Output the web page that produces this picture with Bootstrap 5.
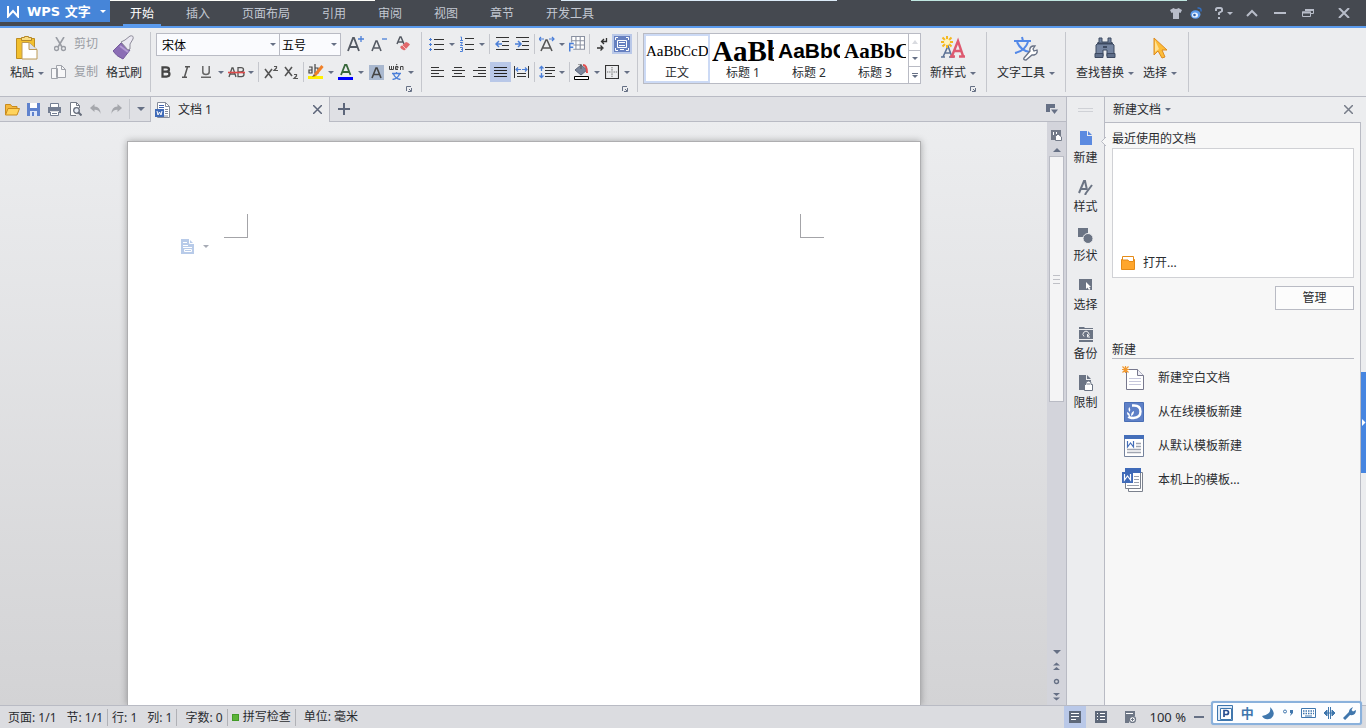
<!DOCTYPE html>
<html lang="zh-CN">
<head>
<meta charset="utf-8">
<meta name="viewport" content="width=device-width, initial-scale=1">
<title>WPS 文字 - 文档 1</title>
<link href="https://cdn.jsdelivr.net/npm/bootstrap@5.3.0/dist/css/bootstrap.min.css" rel="stylesheet">
<style>
:root{--line:#b9bbc4;--face:#ecedef;--bar:#dfe0e4;--ink:#2a2c30}
body{font:12px/16px "Noto Sans","Noto Sans CJK SC",sans-serif;color:var(--ink);background:var(--face);overflow:hidden}
button{background:none;border:0;padding:0;color:inherit;font:inherit;white-space:nowrap}
svg{display:block;flex:none}
.caret{width:0;height:0;border:3px solid transparent;border-top-color:#667085;border-bottom:0;flex:none}
.caret.big{border-width:4px;border-bottom:0}
.caret.up{border-top:0;border-bottom:4px solid #667085}
.line-b{border-bottom:1px solid var(--line)}
.line-r{border-right:1px solid var(--line)}
.line-l{border-left:1px solid var(--line)}
.line-t{border-top:1px solid var(--line)}
/* title bar */
.titlebar{height:28px;border-bottom:2px solid #5b9bee;color:#c3c8d2;background:
 linear-gradient(#fdfdf8,#fdfdf8) 97px 0/278px 1px no-repeat,
 linear-gradient(#dcebf8,#dcebf8) 561px 0/276px 1px no-repeat,
 linear-gradient(#bfe6e0,#bfe6e0) 911px 0/276px 1px no-repeat,#454950}
.brand{width:110px;height:22px;background:#4685d8;color:#fff;font:bold 13px/20px "DejaVu Sans","Noto Sans CJK SC",sans-serif;padding:1px 4px 0 7px}
.menu-link{display:block;padding:0 10px;margin:0 6px;color:#c3c8d2;text-decoration:none;line-height:28px;height:28px}
.menu-link.active{color:#fff;padding:0 7px;margin:0 9px;border-bottom:4px solid #5b9bee}
.win button{width:20px;height:26px;display:flex;align-items:center;justify-content:center;gap:4px}
/* ribbon */
.ribbon{height:69px;padding-top:4px}
.group{height:60px;border-right:1px solid #c5c7cd}
.tool{width:20px;height:20px;display:flex;align-items:center;justify-content:center}
.tool.wide{width:21px}
.tool.on{background:#b9c8e8}
.drop{width:10px;height:20px;display:flex;align-items:center;justify-content:center}
.split{width:1px;height:20px;margin:0 2px;background:#c5c7cd}
.row-a{height:24px;flex:none}
.row-b{height:20px;margin-top:6px;flex:none}
.launch{height:6px;margin-top:4px;flex:none}
.bigbtn{height:54px;display:flex;flex-direction:column;align-items:center}
.bigbtn>svg{margin-top:3px;height:26px}
.bigbtn>span{height:24px;gap:4px}
.dim{color:#9a9da4}
.pick{height:23px;border:1px solid var(--line);border-radius:0;background-color:#fafbfe;color:#000;font:12px/21px "Noto Sans CJK SC",sans-serif;padding:0 12px 0 5px;background-position:right 2px center;background-size:8px 8px;--bs-form-select-bg-img:url("data:image/svg+xml,%3Csvg xmlns='http://www.w3.org/2000/svg' viewBox='0 0 8 8'%3E%3Cpath d='M1 3h6L4 6z' fill='%23667085'/%3E%3C/svg%3E")}
.gallery{height:51px;border:1px solid var(--line);background:#fff}
.swatch{width:66px;height:49px;padding:0;border:2px solid transparent;display:flex;flex-direction:column;justify-content:flex-end;overflow:hidden}
.swatch.on{border-color:#ccdaf5}
.swatch b,.swatch i{display:block;font-style:normal;color:#000;width:100%;overflow:hidden;text-align:left;height:28px;line-height:28px}
.f-norm{font-family:"Liberation Serif",serif;font-size:15px}
.f-h1{font-family:"Liberation Serif",serif;font-size:29px}
.f-h2{font-family:"Liberation Sans",sans-serif;font-size:21px}
.f-h3{font-family:"Liberation Serif",serif;font-size:21px}
.gscroll{width:12px}
.gscroll button{height:16px;width:11px;display:flex;align-items:center;justify-content:center;flex-direction:column;gap:1px}
/* document tabs */
.tabrow{height:25px;background:var(--bar)}
.quick{width:21px;height:24px;display:flex;align-items:center;justify-content:center}
.doctab{width:179px;height:25px;background:var(--face);gap:6px;padding:0 7px 0 4px}
/* canvas */
.canvas{background:linear-gradient(#ecedef,#d3d3d5)}
.sheet{width:794px;margin-top:19px;background:#fff;border:1px solid #aeaeb0;border-bottom:0;box-shadow:0 0 7px rgba(0,0,0,.3);padding:72px 96px 0}
.corner{width:24px;height:24px;border-bottom:1px solid #a4a4a8}
.corner.l{border-right:1px solid #a4a4a8}
.corner.r{border-left:1px solid #a4a4a8}
.para{margin-left:-43px}
.vscroll{width:19px;background:#d3d4db}
.thumb{width:15px;height:246px;background:#f4f4f5;border:1px solid var(--line)}
.grip{width:7px;height:9px;border-top:1px solid #bfc0c6;border-bottom:1px solid #bfc0c6;background:linear-gradient(#bfc0c6,#bfc0c6) 0 3px/7px 1px no-repeat}
.thumb .grip{margin-top:118px}
/* task pane */
.rail{width:38px}
.rail button{height:49px;width:37px;display:flex;flex-direction:column;align-items:center;gap:4px}
.handle{width:15px;height:4px;border-top:1px solid #cfd1d6;border-bottom:1px solid #cfd1d6;margin:11px 0 18px}
.pane{width:261px}
.panebody{background:#f7f7f7;width:256px;padding:8px 6px 0 7px}
.recent{height:130px;border:1px solid #d0d1d5;background:#fff}
.recent a{color:var(--ink);padding:0 8px 6px}
.manage{width:79px;height:24px;border:1px solid var(--line);background:#fcfcfc}
.newlist a{height:34px;color:var(--ink);text-decoration:none;padding-left:10px;gap:12px}
.notch{left:-4px;top:14px;width:5px;height:9px}
.flap{width:5px;height:101px;margin-top:250px;background:#4685e0}
/* status bar */
.status{height:23px;background:#dbdce0;line-height:18px}
.status .cell{gap:10px;height:17px;border-right:1px solid #b0b1b6}
.view{width:22px;height:22px;display:flex;align-items:center;justify-content:center}
.view.on{background:#b9c8e8}
.ime{right:4px;bottom:3px;width:151px;height:24px;border:2px solid #8ab1dc;border-radius:3px;background:#fcfdff;color:#3f76ad;box-shadow:0 0 1px #8ab1dc}
</style>
</head>
<body class="d-flex flex-column vh-100">

<header class="titlebar d-flex flex-shrink-0 align-items-start">
  <button class="brand d-flex align-items-center flex-shrink-0">
    <svg width="12" height="12" viewBox="0 0 12 12"><path d="M1 0v10.500L6 5l5 5.500V0" fill="none" stroke="#fff" stroke-width="2"/></svg>
    <span class="ms-2">WPS 文字</span><span class="caret ms-auto" style="border-top-color:#fff"></span>
  </button>
  <nav class="ms-1"><ul class="list-unstyled d-flex m-0">
    <li><a class="menu-link active" href="#">开始</a></li><li><a class="menu-link" href="#">插入</a></li>
    <li><a class="menu-link" href="#">页面布局</a></li><li><a class="menu-link" href="#">引用</a></li>
    <li><a class="menu-link" href="#">审阅</a></li><li><a class="menu-link" href="#">视图</a></li>
    <li><a class="menu-link" href="#">章节</a></li><li><a class="menu-link" href="#">开发工具</a></li>
  </ul></nav>
  <div class="win d-flex ms-auto align-items-center pe-2">
    <button aria-label="皮肤"><svg width="12" height="11" viewBox="0 0 12 11"><path d="M3.500 0 0 2l1.500 3L3 4.500V11h6V4.500L10.500 5 12 2 8.500 0Q6 2 3.500 0" fill="#b8bdc9"/></svg></button>
    <button aria-label="微博"><svg width="12" height="12" viewBox="0 0 12 12"><ellipse cx="5.500" cy="7.500" rx="5" ry="4.200" fill="#5d9cec"/><ellipse cx="5" cy="8" rx="3" ry="2.600" fill="#e8f1fd"/><circle cx="4.500" cy="8" r="1.300" fill="#2a5fae"/><path d="M7.500 1q4-.5 3.500 3.500" fill="none" stroke="#346fbf" stroke-width="1.500"/></svg></button>
    <button class="ms-2" aria-label="帮助"><svg width="8" height="12" viewBox="0 0 8 12"><path d="M1 4V2.500Q1 1 2.500 1h3Q7 1 7 2.500V4L4 6v2M4 10v2" fill="none" stroke="#b8bdc9" stroke-width="2"/></svg><span class="caret" style="border-top-color:#b8bdc9"></span></button>
    <button class="ms-2 me-2" aria-label="折叠"><svg width="12" height="8" viewBox="0 0 12 8"><path d="m1 7 5-5 5 5" fill="none" stroke="#b8bdc9" stroke-width="2"/></svg></button>
    <button aria-label="最小化"><svg width="12" height="2"><path d="M0 1h12" stroke="#b8bdc9" stroke-width="2"/></svg></button>
    <button class="ms-2 me-3" aria-label="还原"><svg width="12" height="8" viewBox="0 0 12 8"><path d="M3.500 2V.5h8v4H9M.5 3v4.500h8V3z" fill="none" stroke="#b8bdc9"/><path d="M0 3.500h9M3 1h9" stroke="#b8bdc9" stroke-width="2"/></svg></button>
    <button class="me-1" aria-label="关闭"><svg width="12" height="10" viewBox="0 0 12 10"><path d="m1 0 10 10M11 0 1 10" stroke="#b8bdc9" stroke-width="2"/></svg></button>
  </div>
</header>

<section class="ribbon d-flex flex-shrink-0 line-b" aria-label="开始">
  <div class="group d-flex ps-2" style="width:151px">
    <button class="bigbtn" style="width:38px"><svg width="22" height="24" viewBox="0 0 22 26"><path d="M.5 3.500h18v20H.5z" fill="#f2c02e" stroke="#bd8d22"/><path d="M5.500 5.500v-3h3v-1h4v1h3v3z" fill="#f8dc83" stroke="#b58727"/><path d="M6 7.500h7l8 7V24H6z" fill="#fff" stroke="#bd9a54"/><path d="M13 8v6.500h8" fill="#dce0ea" stroke="#bd9a54"/></svg><span class="d-flex align-items-center">粘贴<i class="caret"></i></span></button>
    <div class="d-flex flex-column dim ms-1">
      <button class="d-flex align-items-center gap-2 row-a ps-1"><svg width="12" height="15" viewBox="0 0 12 15"><path d="m2 0 6 10M10 0 4 10" stroke="#9a9da4" stroke-width="1.600"/><circle cx="2.500" cy="11.500" r="2" fill="none" stroke="#9a9da4" stroke-width="1.400"/><circle cx="9.500" cy="11.500" r="2" fill="none" stroke="#9a9da4" stroke-width="1.400"/></svg>剪切</button>
      <button class="d-flex align-items-center gap-2 row-b"><svg width="16" height="15" viewBox="-1 0 16 15"><path d="M.5 3.500h6v10h-6zM5.500.5h5l4 4v8h-9z" fill="#f7f7f8" stroke="#a0a3aa"/><path d="M10.500.5v4h4" fill="none" stroke="#a0a3aa"/></svg><span>复制</span></button>
    </div>
    <button class="bigbtn ms-2"><svg width="22" height="24" viewBox="0 0 22 24"><path d="m8 7 9 7-7 9Q3 20 0 15z" fill="#8b6db5" stroke="#745a9b"/><path d="m7 10 8 6" stroke="#b49bd4" stroke-width="2"/><path d="m8 6 4-2 5-4q4-1 3 3l-3 5v5l-2 1z" fill="#eceaf3" stroke="#8d8b99"/></svg><span class="d-flex align-items-center">格式刷</span></button>
  </div>

  <div class="group d-flex flex-column" style="width:271px;padding:0 5px">
    <div class="row-a d-flex align-items-center">
      <label class="visually-hidden" for="ff">字体</label><select id="ff" class="form-select pick" style="width:124px"><option>宋体</option></select>
      <label class="visually-hidden" for="fs">字号</label><select id="fs" class="form-select pick" style="width:62px;margin-left:-1px;padding-left:2px"><option>五号</option></select>
      <button class="tool ms-1" aria-label="增大字号"><svg width="18" height="18" viewBox="0 0 18 18"><path d="m2 16 5-13h1l5 13M4 12h7" fill="none" stroke="#555a63" stroke-width="1.800"/><path d="M15 1v6M12 4h6" stroke="#4b7fd8" stroke-width="1.300"/></svg></button>
      <button class="tool ms-1" aria-label="减小字号"><svg width="18" height="18" viewBox="0 0 18 18"><path d="m2 16 4-10h1l4 10M4 13h5" fill="none" stroke="#555a63" stroke-width="1.600"/><path d="M12 4h5" stroke="#4b7fd8" stroke-width="1.300"/></svg></button>
      <button class="tool ms-1" aria-label="清除格式"><svg width="15" height="16" viewBox="0 0 15 16"><path d="m1 8 3-7h1l3 7M2 6h5" fill="none" stroke="#555a63" stroke-width="1.500"/><path d="m4 11 6-5q2 0 4 2.500l-5 5.500q-3 1-5-3" fill="#e2686b"/><path d="m6 9 4 4" stroke="#f7c1c1"/></svg></button>
    </div>
    <div class="row-b d-flex">
      <button class="tool" aria-label="加粗"><svg width="12" height="12" viewBox="0 0 12 12"><path d="M2.500 1.300H6Q9 1.300 9 3.500T6 5.700H2.500zM2.500 5.700h4q3 0 3 2.400t-3 2.500h-4z" fill="none" stroke="#444" stroke-width="2.200"/></svg></button>
      <button class="tool" aria-label="倾斜"><svg width="10" height="12" viewBox="0 0 10 12"><path d="M4 .8h5M1 11.200h5M6.500 1l-3 10" stroke="#555" stroke-width="1.500"/></svg></button>
      <button class="tool" aria-label="下划线"><svg width="10" height="12" viewBox="0 0 10 12"><path d="M1.800 0v6q0 2.500 3.200 2.500T8.200 6V0M0 11.200h10" fill="none" stroke="#666" stroke-width="1.500"/></svg></button>
      <button class="drop" aria-label="下划线样式"><i class="caret"></i></button>
      <button class="tool" aria-label="删除线"><svg width="17" height="12" viewBox="0 0 17 12"><path d="m1 11 3-9h1l3 9M2 8h5M10 1.700h3q2.500 0 2.500 2T13 6h-3zM10 6h3.500Q16 6 16 8.300t-2.500 2.300H10z" fill="none" stroke="#555" stroke-width="1.300"/><path d="M0 6.500h17" stroke="#e04a4a" stroke-width="1.600"/></svg></button>
      <button class="drop" aria-label="删除线选项"><i class="caret"></i></button><i class="split"></i>
      <button class="tool" aria-label="上标"><svg width="15" height="14" viewBox="0 0 15 14"><path d="m1 4 7 9M8 4l-7 9" stroke="#555" stroke-width="1.600"/><path d="M10 1.500h2.500V3L10 5.500h4" fill="none" stroke="#555" stroke-width="1.200"/></svg></button>
      <button class="tool" aria-label="下标"><svg width="15" height="15" viewBox="0 0 15 15"><path d="m1 2 7 9M8 2l-7 9" stroke="#555" stroke-width="1.600"/><path d="M10 9.500h2.500V11L10 13.500h4" fill="none" stroke="#555" stroke-width="1.200"/></svg></button><i class="split"></i>
      <button class="tool" aria-label="突出显示"><svg width="16" height="16" viewBox="0 0 16 16"><path d="M1 3h3v6H1V6h3M7 0v9h3V4H7" fill="none" stroke="#444" stroke-width="1.200"/><path d="M0 12h15v3H0z" fill="#fff000"/><path d="M14.500 2 7 11" stroke="#f08028" stroke-width="3"/><path d="m6 10-2 3 4-1z" fill="#8b6030"/></svg></button>
      <button class="drop" aria-label="突出显示颜色"><i class="caret"></i></button>
      <button class="tool" aria-label="字体颜色"><svg width="16" height="16" viewBox="0 0 16 16"><path d="m3 11 4-10h1.500l4 10M4.500 8H11" fill="none" stroke="#39683b" stroke-width="1.800"/><path d="M0 13h15v3H0z" fill="#00f"/></svg></button>
      <button class="drop" aria-label="选择字体颜色"><i class="caret"></i></button>
      <button class="tool" aria-label="字符底纹"><svg width="15" height="15" viewBox="0 0 15 15"><path d="M0 0h15v15H0z" fill="#a9b8cf"/><path d="m3 13 4-10h1l4 10M5 9.500h5" fill="none" stroke="#444" stroke-width="1.600"/></svg></button>
      <button class="tool" aria-label="拼音指南"><svg width="15" height="16" viewBox="0 0 15 16"><path d="M.5 2v3.500h4V2M2.500 2v3.500M9 5.500H6.500v-3H9V4H6.500M11.500 6V2.500H14V6M7 1l1.500-1" fill="none" stroke="#444"/><path d="M3 9.500h9M7.500 8v2M4.500 10q2 5 7 5.500M10.500 10q-2 5-7 5.500" fill="none" stroke="#4b7fd8" stroke-width="1.300"/></svg></button>
      <button class="drop" aria-label="拼音选项"><i class="caret"></i></button>
    </div>
    <button class="launch align-self-end me-1" aria-label="字体设置"><svg width="6" height="6" viewBox="0 0 6 6"><path d="M.5 5V.5H5M2 5.500h3.500V2M3 3l2 2" fill="none" stroke="#667085"/></svg></button>
  </div>

  <div class="group d-flex flex-column" style="width:216px;padding:0 5px">
    <div class="row-a d-flex align-items-center">
      <button class="tool" aria-label="项目符号"><svg width="16" height="14" viewBox="0 0 16 14"><path d="M5 2.500h10M5 7.500h10M5 12.500h10" stroke="#333"/><path d="M0 2.500h3M1.500 1v3M0 7.500h3M1.500 6v3M0 12.500h3M1.500 11v3" stroke="#4b7fd8"/></svg></button>
      <button class="drop" aria-label="项目符号样式"><i class="caret"></i></button>
      <button class="tool" aria-label="编号"><svg width="14" height="16" viewBox="0 0 14 16"><path d="M5 2.500h9M5 8.500h9M5 13.500h9" stroke="#333"/><path d="M.5 1h1v3M0 4.500h3M0 6.500h2.500L.5 9.500H3M0 11.500h2.500v4H0M1 13.500h1.500" fill="none" stroke="#4b7fd8"/></svg></button>
      <button class="drop" aria-label="编号样式"><i class="caret"></i></button><i class="split"></i>
      <button class="tool" aria-label="减少缩进"><svg width="14" height="14" viewBox="0 0 14 14"><path d="M1 .5h13M7 4.500h7M7 8.500h7M1 12.500h13" stroke="#333"/><path d="M1 7h6M4 4 1 7l3 3" fill="none" stroke="#4b7fd8" stroke-width="1.500"/></svg></button>
      <button class="tool" aria-label="增加缩进"><svg width="14" height="14" viewBox="0 0 14 14"><path d="M1 .5h13M7 4.500h7M7 8.500h7M1 12.500h13" stroke="#333"/><path d="M0 7h6M3 4l3 3-3 3" fill="none" stroke="#4b7fd8" stroke-width="1.500"/></svg></button><i class="split"></i>
      <button class="tool" aria-label="中文版式"><svg width="16" height="16" viewBox="0 0 16 16"><path d="m2 15 5-11h1l5 11M4 12h7" fill="none" stroke="#555" stroke-width="1.600"/><path d="M5 3H0M2 1 0 3l2 2M10 3h5M13 1l2 2-2 2" fill="none" stroke="#4b7fd8" stroke-width="1.200"/></svg></button>
      <button class="drop" aria-label="中文版式选项"><i class="caret"></i></button>
      <button class="tool" aria-label="插入表格"><svg width="16" height="16" viewBox="0 0 15 15"><path d="M2.500.5h12v12h-12z" fill="#fff"/><path d="M2.500.5h12v12h-12zM6.500.5v12M10.500.5v12M2.500 4.500h12M2.500 8.500h12" fill="none" stroke="#8990a0"/><path d="M0 6h4v9H0z" fill="#ecedef"/><path d="M.7 14.500V7H4.500M1 10.500h3" fill="none" stroke="#4b7fd8" stroke-width="1.400"/></svg></button><i class="split"></i>
      <button class="tool" aria-label="显示标记"><svg width="11" height="13" viewBox="0 0 11 13"><path d="M9.500 0v3.500H5M7 1 4.500 3.500 7 6M0 10h5M3.500 7.500 6 10l-2.500 2.500" fill="none" stroke="#333" stroke-width="1.300"/></svg></button>
      <button class="tool on" aria-label="段落布局" aria-pressed="true"><svg width="16" height="16" viewBox="0 0 16 16"><path d="M0 0h16v16H0z" fill="#6680c0"/><path d="M1.500 4V1.500H4M12 1.500h2.500V4M1.500 12v2.500H4M12 14.500h2.500V12M3.500 4.500h9v7h-9zM5 6.500h6M5 9.500h6M6 13.500h4" fill="none" stroke="#fff"/></svg></button>
    </div>
    <div class="row-b d-flex">
      <button class="tool wide" aria-label="左对齐"><svg width="13" height="10"><path d="M0 .5h8M0 3.500h13M0 6.500h8M0 9.500h13" stroke="#333"/></svg></button>
      <button class="tool wide" aria-label="居中"><svg width="13" height="10"><path d="M2 .5h8M0 3.500h13M2 6.500h8M0 9.500h13" stroke="#333"/></svg></button>
      <button class="tool wide" aria-label="右对齐"><svg width="13" height="10"><path d="M5 .5h8M0 3.500h13M5 6.500h8M0 9.500h13" stroke="#333"/></svg></button>
      <button class="tool wide on" aria-label="两端对齐" aria-pressed="true"><svg width="13" height="10"><path d="M0 .5h13M0 3.500h13M0 6.500h13M0 9.500h13" stroke="#222"/></svg></button>
      <button class="tool wide" aria-label="分散对齐"><svg width="15" height="12" viewBox="0 0 15 12"><path d="M.5 0v12M14.500 0v12M3 7.500h9M3 10.500h9" stroke="#333"/><path d="M2.500 3.500H7M8 3.500h4.500M4 1.500l-2 2 2 2M11 1.500l2 2-2 2" fill="none" stroke="#4b7fd8" stroke-width="1.200"/></svg></button><i class="split"></i>
      <button class="tool" aria-label="行距"><svg width="16" height="14" viewBox="0 0 16 14"><path d="M6 2.500h10M6 5.500h10M6 8.500h7M6 11.500h10" stroke="#333"/><path d="M2.500 1v5M2.500 8v5M.5 3.500l2-2 2 2M.5 10.500l2 2 2-2" fill="none" stroke="#4b7fd8" stroke-width="1.300"/></svg></button>
      <button class="drop" aria-label="行距选项"><i class="caret"></i></button><i class="split"></i>
      <button class="tool" aria-label="底纹颜色"><svg width="16" height="16" viewBox="0 0 16 16"><path d="m7 1 6 5-6 5-6-5z" fill="#7a869c" stroke="#5c6679"/><path d="M4 0h3v5" fill="none" stroke="#555"/><path d="M9 1q4 0 4 8" fill="none" stroke="#e05050" stroke-width="2"/><path d="M.5 12.500h14v3H.5z" fill="#fff" stroke="#000"/></svg></button>
      <button class="drop" aria-label="选择底纹颜色"><i class="caret"></i></button>
      <button class="tool" aria-label="边框"><svg width="14" height="14" viewBox="0 0 13 13"><path d="M.5.5h12v12H.5z" fill="none" stroke="#333"/><path d="M6.500 2v9M2 6.500h9" stroke="#555" stroke-dasharray="1 1"/></svg></button>
      <button class="drop" aria-label="边框选项"><i class="caret"></i></button>
    </div>
    <button class="launch align-self-end me-1" aria-label="段落设置"><svg width="6" height="6" viewBox="0 0 6 6"><path d="M.5 5V.5H5M2 5.500h3.500V2M3 3l2 2" fill="none" stroke="#667085"/></svg></button>
  </div>

  <div class="group d-flex" style="width:349px;padding:0 10px 0 5px">
    <div class="gallery d-flex" style="margin-top:1px">
      <button class="swatch on align-items-center"><i class="f-norm">AaBbCcDd</i><span>正文</span></button>
      <button class="swatch align-items-center"><b class="f-h1">AaBb</b><span>标题 1</span></button>
      <button class="swatch align-items-center"><b class="f-h2">AaBbC</b><span>标题 2</span></button>
      <button class="swatch align-items-center"><b class="f-h3">AaBbC</b><span>标题 3</span></button>
      <div class="gscroll line-l d-flex flex-column">
        <button aria-label="上一行"><i class="caret up opacity-25"></i></button>
        <button class="line-t" aria-label="下一行"><i class="caret"></i></button>
        <button class="line-t flex-fill" aria-label="更多样式"><i style="width:6px;height:1px;background:#667085"></i><i class="caret"></i></button>
      </div>
    </div>
    <div class="d-flex flex-column ms-auto">
      <button class="bigbtn"><svg width="24" height="24" viewBox="0 0 24 24"><path d="m2 21 5-11 4 11M4 17h6M0 21h4M8 21h5" fill="none" stroke="#5e7397" stroke-width="1.600"/><path d="m11 20 6-15 5 15M13 15h7M9 20.500h5M18 20.500h6" fill="none" stroke="#de5a70" stroke-width="2.400"/><path d="M6 0v12M0 6h12M1.500 1.500l9 9M10.500 1.500l-9 9" stroke="#f5b81f" stroke-width="2"/><circle cx="6" cy="6" r="3" fill="#fff4c0"/></svg><span class="d-flex align-items-center">新样式<i class="caret"></i></span></button>
      <button class="align-self-end" aria-label="样式设置" style="height:6px"><svg width="6" height="6" viewBox="0 0 6 6"><path d="M.5 5V.5H5M2 5.500h3.500V2M3 3l2 2" fill="none" stroke="#667085"/></svg></button>
    </div>
  </div>
  <div class="group d-flex justify-content-center" style="width:79px">
    <button class="bigbtn"><svg width="24" height="24" viewBox="0 0 24 24"><path d="M0 5h17M8 1l1 4M3 6q4 9 13 10M14 6Q11 15 1 17" fill="none" stroke="#5389e8" stroke-width="2"/><path d="m10 22 6-7q-1-4 3-5l2 0-2 3 1 2 3-1q1 4-3 5l-2 0-6 5q-3 0-2-2z" fill="#fff" stroke="#687286" stroke-width="1.300"/></svg><span class="d-flex align-items-center">文字工具<i class="caret"></i></span></button>
  </div>
  <div class="group d-flex" style="width:123px;padding:0 11px 0 10px">
    <button class="bigbtn"><svg width="22" height="24" viewBox="0 0 22 24"><path d="M5 2h3v4h6V2h3v4l3 3v11h-7v-6H9v6H2V9l3-3z" fill="#7484a0" stroke="#3d4a61"/><path d="M3 7.500h16M9 11h4" stroke="#3d4a61" stroke-width="2"/><path d="M1 17.500h8v4H1zM13 17.500h8v4h-8z" fill="#5f6e89" stroke="#3d4a61"/></svg><span class="d-flex align-items-center">查找替换<i class="caret"></i></span></button>
    <button class="bigbtn ms-auto"><svg width="16" height="24" viewBox="0 0 16 24"><path d="M2 2v17l4-4 4 7 3-1-3-7h5z" fill="#fdbd38" stroke="#dc8b22"/><path d="M3 4v12l4-3z" fill="#ffe092"/></svg><span class="d-flex align-items-center">选择<i class="caret"></i></span></button>
  </div>
</section>

<div class="d-flex flex-fill" style="min-height:0">
  <main class="d-flex flex-column flex-fill line-r" style="min-width:0">
    <div class="tabrow d-flex flex-shrink-0">
      <div class="d-flex line-b line-r align-items-center" style="width:151px;padding-left:2px">
        <button class="quick" aria-label="打开"><svg width="15" height="13" viewBox="0 0 15 13"><path d="M.5 12V1.500h5l1.500 2h5V6" fill="#f5b83d" stroke="#c98b1d"/><path d="M.5 12 3 5.500h11.500L12 12z" fill="#ffd35c" stroke="#c98b1d"/></svg></button>
        <button class="quick" aria-label="保存"><svg width="13" height="13" viewBox="0 0 13 13"><path d="M0 0h13v13H0z" fill="#5f82cd"/><path d="M3 0h7v5H3z" fill="#fff"/><path d="M3 8h7v5H3z" fill="#dce5f8"/><path d="M5 9h2v4H5z" fill="#5f82cd"/></svg></button>
        <button class="quick" aria-label="打印"><svg width="13" height="13" viewBox="0 0 13 13"><path d="M2.500 4V.5h8V4M2.500 9v3.500h8V9" fill="#fff" stroke="#747e92"/><path d="M0 4h13v6h-2V8H2v2H0z" fill="#747e92"/><path d="M4 10.500h5" stroke="#747e92"/></svg></button>
        <button class="quick" aria-label="打印预览"><svg width="13" height="14" viewBox="0 0 13 14"><path d="M7 13.500H1.500V.5h6l3 3V6" fill="#fff" stroke="#747a86"/><path d="M7.500.5v3h3" fill="none" stroke="#747a86"/><circle cx="7.500" cy="8.500" r="2.800" fill="#e5eaf4" stroke="#666d7b" stroke-width="1.300"/><path d="m9.500 10.500 3 3" stroke="#666d7b" stroke-width="2"/></svg></button>
        <button class="quick" aria-label="撤销"><svg width="11" height="10" viewBox="0 0 11 10"><path d="M0 4 4.500 0v2.500Q10.500 2.500 10.500 10 9 5.500 4.500 5.800V8z" fill="#a5a7ac"/></svg></button>
        <button class="quick" aria-label="恢复"><svg width="11" height="10" viewBox="0 0 11 10"><path d="M11 4 6.500 0v2.500Q.5 2.500.5 10 2 5.500 6.500 5.800V8z" fill="#a5a7ac"/></svg></button>
        <i class="split"></i><button class="quick" style="width:18px" aria-label="自定义快速访问"><i class="caret big"></i></button>
      </div>
      <div class="doctab d-flex align-items-center line-r">
        <svg width="17" height="16" viewBox="0 0 17 16"><path d="M2.500 15.500V.5h8l4 4v11z" fill="#fff" stroke="#858c9b"/><path d="M10.500.5v4h4" fill="none" stroke="#858c9b"/><path d="M4 3.500h5M4 5.500h5" stroke="#3f62ad"/><path d="M10 7.500h3M10 9.500h3M10 11.500h3M5 14h8" stroke="#858c9b"/><path d="M0 7h9v8H0z" fill="#3f6ab8"/><path d="m2 9 1 4 1.500-3L6 13l1-4" fill="none" stroke="#fff"/></svg>
        <span>文档 1</span>
        <button class="ms-auto" aria-label="关闭文档"><svg width="9" height="9"><path d="m0 0 9 9M9 0 0 9" stroke="#5d667a" stroke-width="1.500"/></svg></button>
      </div>
      <div class="d-flex flex-fill line-b align-items-center justify-content-between px-2">
        <button aria-label="新建文档"><svg width="12" height="12"><path d="M6 0v12M0 6h12" stroke="#5d667a" stroke-width="2"/></svg></button>
        <button aria-label="文档列表"><svg width="12" height="11" viewBox="0 0 12 11"><path d="M0 0h9v4H4v4H0z" fill="#667085"/><path d="M5 5.500h7L8.500 10z" fill="#667085"/></svg></button>
      </div>
    </div>
    <div class="d-flex flex-fill" style="min-height:0">
      <div class="canvas d-flex justify-content-center flex-fill overflow-hidden">
        <article class="sheet flex-shrink-0">
          <div class="d-flex justify-content-between"><div class="corner l"></div><div class="corner r"></div></div>
          <button class="para d-flex align-items-center gap-1" aria-label="段落布局"><svg width="14" height="16" viewBox="0 0 14 16"><path d="M0 1h8l5 5v10H0z" fill="#b8cbe9"/><path d="M8.500 1v4.500H13M2 4.500h4M2 7.500h5M2 9.500h9M3.500 11.500h7v2h-7z" fill="none" stroke="#fff"/></svg><i class="caret ms-1" style="border-top-color:#a7abb5"></i></button>
        </article>
      </div>
      <div class="vscroll d-flex flex-column align-items-center flex-shrink-0">
        <button class="mt-2" aria-label="浏览视图"><svg width="11" height="11" viewBox="0 0 11 11"><path d="M0 0h10v10H0z" fill="#737a88"/><path d="M2 2h1v3H2zM5 2h1v2H5z" fill="#fff"/><path d="M4.500 10.500v-4L7 4l3.500 3v3.500z" fill="#fff" stroke="#737a88"/></svg></button>
        <button class="mb-1" style="margin-top:7px" aria-label="向上滚动"><i class="caret big up d-block"></i></button>
        <div class="thumb d-flex justify-content-center"><i class="grip"></i></div>
        <div class="mt-auto d-flex flex-column align-items-center gap-2 pb-1">
          <button aria-label="向下滚动"><i class="caret big d-block"></i></button>
          <button aria-label="上一页"><svg width="7" height="8"><path d="m0 3.500 3.500-3 3.500 3zM0 8l3.500-3L7 8z" fill="#667085"/></svg></button>
          <button aria-label="选择浏览对象"><svg width="7" height="7"><circle cx="3.500" cy="3.500" r="2" fill="none" stroke="#667085" stroke-width="1.400"/></svg></button>
          <button aria-label="下一页"><svg width="7" height="8"><path d="m0 0 3.500 3L7 0zM0 4.500l3.500 3 3.500-3z" fill="#667085"/></svg></button>
        </div>
      </div>
    </div>
  </main>

  <nav class="rail d-flex flex-column align-items-center flex-shrink-0 line-r" aria-label="任务窗格">
    <i class="handle"></i>
    <button><svg width="12" height="16" viewBox="0 0 12 16"><path d="M0 1h7v5h5v9H0z" fill="#5b8ae0"/><path d="m8 1 4 4H8z" fill="#5b8ae0"/></svg><span>新建</span></button>
    <button><svg width="15" height="16" viewBox="0 0 15 16"><path d="m1 14 5-12h1l2 9M3 10h6" fill="none" stroke="#6b7484" stroke-width="2"/><path d="m14 6-6 8M8 14l-1 2" stroke="#6b7484" stroke-width="2"/></svg><span>样式</span></button>
    <button><svg width="15" height="16" viewBox="0 0 15 16"><path d="M0 0h10v9H0z" fill="#6b7484"/><circle cx="10" cy="10.500" r="5" fill="#6b7484" stroke="#ecedef"/></svg><span>形状</span></button>
    <button><svg width="13" height="16" viewBox="0 0 13 16"><path d="M0 2h13v11H0z" fill="#6b7484"/><path d="m7 5 0 7 1.500-1.500L10 13l1.500-1-1.500-2h2z" fill="#fff"/></svg><span>选择</span></button>
    <button><svg width="14" height="16" viewBox="0 0 14 16"><path d="M0 1h5l1 1h8v11H0zM0 14h14v2H0z" fill="#6b7484"/><path d="M0 3.500h14M5 10.500a3 3 0 1 1 4 0M8.500 8v3H11" fill="none" stroke="#ecedef"/></svg><span>备份</span></button>
    <button><svg width="14" height="16" viewBox="0 0 14 16"><path d="M0 0h7v5h5v10H0z" fill="#6b7484"/><path d="m8 0 4 4H8z" fill="#6b7484"/><path d="M7 9.500V8q0-2 2.500-2T12 8v1.500h1.500v6h-8v-6zM8 9h3" fill="#fff" stroke="#6b7484"/></svg><span>限制</span></button>
  </nav>

  <aside class="pane d-flex flex-column flex-shrink-0">
    <div class="d-flex align-items-center ps-2 flex-shrink-0" style="height:25px">
      <button class="d-flex align-items-center gap-1">新建文档<i class="caret"></i></button>
      <button class="ms-auto" style="margin-right:13px" aria-label="关闭窗格"><svg width="9" height="9"><path d="m0 0 9 9M9 0 0 9" stroke="#777d89" stroke-width="1.500"/></svg></button>
    </div>
    <div class="d-flex flex-fill">
      <div class="panebody line-r line-t position-relative">
        <svg class="notch position-absolute" viewBox="0 0 5 9"><path d="M5 0 .5 4.500 5 9" fill="#f7f7f7" stroke="#b9bbc4"/></svg>
        <div style="height:17px">最近使用的文档</div>
        <div class="recent d-flex align-items-end"><a href="#" class="d-flex align-items-center gap-2 text-decoration-none"><svg width="14" height="14" viewBox="0 0 14 14"><path d="M.5 3.500V13.500h13V3.500z" fill="#ffa62c" stroke="#e58b18"/><path d="M1.500.5h11v5H8l-1-1.500H1.500z" fill="#fff" stroke="#e58b18"/></svg>打开...</a></div>
        <div class="text-end mt-2"><button class="manage">管理</button></div>
        <div class="line-b" style="margin-top:32px">新建</div>
        <div class="newlist d-flex flex-column" style="padding-top:2px">
          <a href="#" class="d-flex align-items-center"><svg width="24" height="24" viewBox="0 0 24 24"><path d="M4.500 3.500h11l6 6v14h-17z" fill="#fff" stroke="#77788d"/><path d="M15.500 3.500v6h6" fill="#eeeef6" stroke="#77788d"/><path d="M7 12.500h12M7 15.500h12M7 18.500h12" stroke="#c6c7dc"/><path d="M0 3.500h7M3.500 0v7M.5.500l6 6M6.500.5l-6 6" stroke="#f29a31" stroke-width="1.200"/></svg>新建空白文档</a>
          <a href="#" class="d-flex align-items-center"><svg width="24" height="24" viewBox="0 0 24 24"><path d="M2.500 2.500h19v19h-19z" fill="#5e80c7" stroke="#496eb5"/><path d="M10 5.500h2q6.500 0 6.500 6t-7 6.500q-4 0-5-1.500" fill="none" stroke="#fff" stroke-width="2.400"/><path d="M7.500 7q-2 2 0 5 1.500-2 0-5M5 12q0 4 3 4 0-3-3-4M12 11q-3 1-3 5 3-1 3-5" fill="#fff"/></svg>从在线模板新建</a>
          <a href="#" class="d-flex align-items-center"><svg width="24" height="24" viewBox="0 0 24 24"><path d="M2.500 2.500h19v20h-19z" fill="#fff" stroke="#74829c"/><path d="M2 1h20v4H2z" fill="#456fb9"/><path d="M5.500 7v6l3-4 3 4V7" fill="none" stroke="#456fb9" stroke-width="1.200"/><path d="M14 9.500h5M14 12.500h5M5 15.500h14M5 18.500h14" stroke="#a0a5b1" stroke-width="1.300"/></svg>从默认模板新建</a>
          <a href="#" class="d-flex align-items-center"><svg width="24" height="24" viewBox="0 0 24 24"><path d="M6.500 4.500h14v19h-14z" fill="#fff" stroke="#7b818d"/><path d="M3.500.5h15v20h-15z" fill="#fff" stroke="#7b818d"/><path d="M3 0h16v5H3zM0 4h11v11H0z" fill="#3f6ab8"/><path d="M2.500 6v6l3-4 3 4V6" fill="none" stroke="#fff" stroke-width="1.200"/><path d="M12 8.500h5M12 11.500h5M12 14.500h5M5 17.500h12" stroke="#9aa0ac"/></svg>本机上的模板...</a>
        </div>
      </div>
      <button class="flap d-flex align-items-center" aria-label="展开侧栏"><svg width="5" height="7"><path d="M1 0v7l3.500-3.500z" fill="#fff"/></svg></button>
    </div>
  </aside>
</div>

<footer class="status d-flex align-items-center line-t flex-shrink-0 position-relative">
  <span class="cell ps-2 pe-1 d-flex"><span>页面: 1/1</span><span>节: 1/1</span></span>
  <span class="cell px-1 d-flex"><span>行: 1</span><span>列: 1</span></span>
  <span class="cell ps-2 pe-1">字数: 0</span>
  <span class="cell px-1 d-flex align-items-center gap-1"><i style="width:7px;height:7px;background:#5cb338;border:1px solid #429b28"></i>拼写检查</span>
  <span class="ps-2">单位: 毫米</span>
  <div class="d-flex align-items-center ms-auto" style="margin-right:162px">
    <button class="view on" aria-label="页面视图"><svg width="12" height="12"><path d="M0 0h12v12H0z" fill="#5e6879"/><path d="M2 2.500h8M2 5.500h8M2 8.500h5" stroke="#fff"/></svg></button>
    <button class="view ms-1" aria-label="大纲视图"><svg width="12" height="12"><path d="M0 0h12v12H0z" fill="#5e6879"/><path d="M2 2.500h1M5 2.500h5M2 5.500h1M5 5.500h5M2 8.500h1M5 8.500h5" stroke="#fff"/></svg></button>
    <button class="view ms-2" aria-label="网页视图"><svg width="12" height="12" viewBox="0 0 12 12"><path d="M0 0h10v5H8v5H4v2H0z" fill="#6e7786"/><path d="M1 2.500h7" stroke="#fff"/><circle cx="7.500" cy="8.500" r="3" fill="#fff" stroke="#6e7786" stroke-width="1.300"/><path d="M6 8.500h3M7.500 7v3" stroke="#6e7786"/></svg></button>
    <span class="ms-2" style="font-size:13px">100 %</span>
    <button class="ms-2" aria-label="缩小"><svg width="10" height="2"><path d="M0 1h10" stroke="#667085" stroke-width="2"/></svg></button>
  </div>
  <div class="ime position-absolute d-flex align-items-center justify-content-between px-1" role="toolbar" aria-label="输入法">
    <button aria-label="输入法"><svg width="16" height="16" viewBox="0 0 16 16"><path d="M.5.5h15v15H.5z" fill="#dfeaf7" stroke="#3f76ad"/><path d="M3.500 3.500h11v11h-11z" fill="#fff" stroke="#3f76ad"/><path d="M7 12V5.500h2.500Q11.500 5.500 11.500 7.500t-2 2H7" fill="none" stroke="#2a4f91" stroke-width="1.700"/></svg></button>
    <button class="fw-bold" style="font-size:13px">中</button>
    <button aria-label="半角"><svg width="13" height="13" viewBox="0 0 13 13"><path d="M8 0q2 7-8 9 3 5 9 2.500Q15 7 8 0" fill="#3f76ad"/></svg></button>
    <button aria-label="标点"><svg width="11" height="8" viewBox="0 0 11 8"><circle cx="2" cy="2.500" r="1.500" fill="none" stroke="#3f76ad"/><path d="M7 1h3v3L7 7l1-3H7z" fill="#3f76ad"/></svg></button>
    <button aria-label="软键盘"><svg width="15" height="10" viewBox="0 0 15 10"><path d="M.5.5h14v9H.5z" fill="#fff" stroke="#3f76ad"/><path d="M2 3h11M2 5.500h11" stroke="#3f76ad" stroke-width="1.500" stroke-dasharray="1.500 1"/><path d="M4 8h7" stroke="#3f76ad"/></svg></button>
    <button aria-label="简繁切换"><svg width="11" height="12" viewBox="0 0 11 12"><path d="M4.500 0v12M6.500 0v12M0 6h11M0 6l3-3v6zM11 6 8 3v6z" fill="#3f76ad" stroke="#3f76ad"/></svg></button>
    <button aria-label="设置"><svg width="13" height="13" viewBox="0 0 13 13"><path d="m1 12 6-6" stroke="#3f76ad" stroke-width="3"/><path d="M6 7q-1-5 4-7L8.500 3 10 4.500 13 3q0 6-6 5" fill="#3f76ad"/></svg></button>
  </div>
</footer>
<script src="https://cdn.jsdelivr.net/npm/bootstrap@5.3.0/dist/js/bootstrap.bundle.min.js"></script>
</body>
</html>
